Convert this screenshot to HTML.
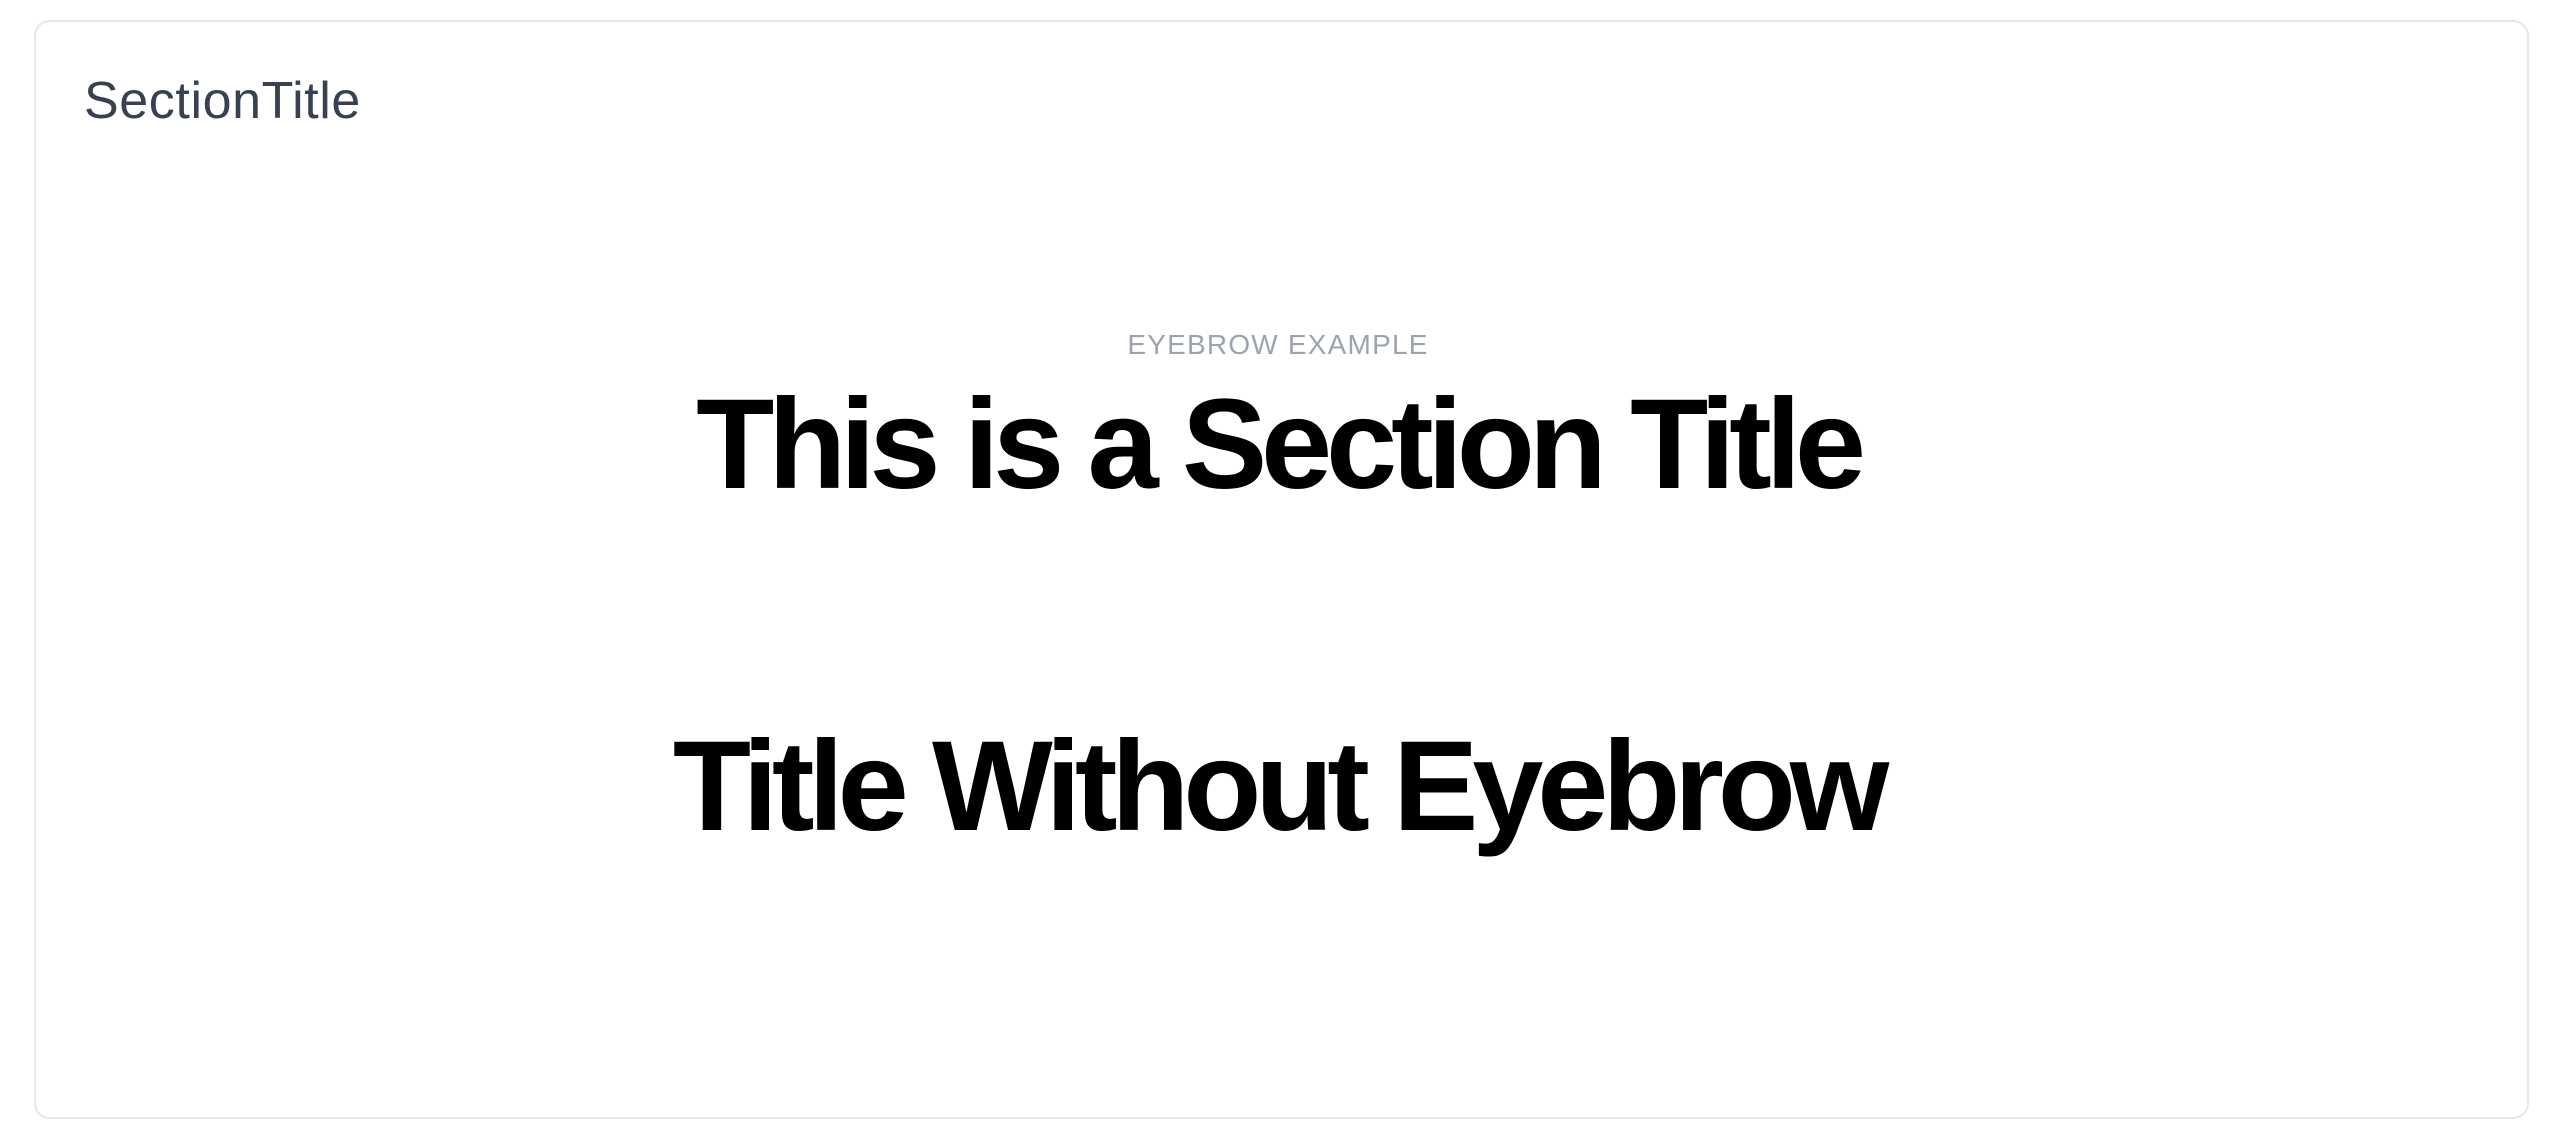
<!DOCTYPE html>
<html><head><meta charset="utf-8"><style>
html,body{margin:0;padding:0;width:2556px;height:1138px;background:#fff;overflow:hidden;font-family:"Liberation Sans",Arial,sans-serif}
.card{position:absolute;left:34px;top:20px;width:2495px;height:1099px;border:2px solid #e5e7eb;border-radius:16px;box-sizing:border-box}
.t{position:absolute;line-height:1;white-space:nowrap}
.st{left:84px;top:75px;font-size:52px;color:#374151;letter-spacing:0.6px}
.eb{left:0;width:2556px;text-align:center;top:331px;font-size:28px;color:#9ca3af;letter-spacing:1.2px}
.h{left:0;width:2556px;text-align:center;font-size:128px;font-weight:bold;color:#000;letter-spacing:-6.2px}
</style></head><body>
<div class="card"></div>
<div class="t st">SectionTitle</div>
<div class="t eb">EYEBROW EXAMPLE</div>
<div class="t h" style="top:381px">This is a Section Title</div>
<div class="t h" style="top:723px">Title Without Eyebrow</div>
</body></html>
